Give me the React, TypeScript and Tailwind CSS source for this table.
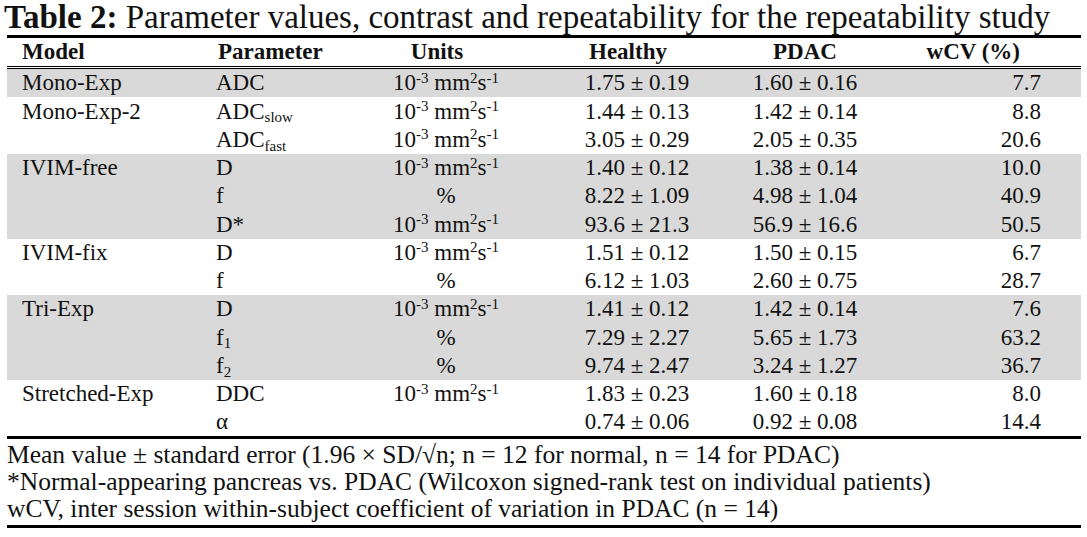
import React from "react";

type Row = {
  model?: string;
  param: React.ReactNode;
  units?: "mm" | "pct";
  healthy: string;
  pdac: string;
  wcv: string;
};

type Group = { shaded: boolean; rows: Row[] };

const Sub = ({ children }: { children: React.ReactNode }) => (
  <sub className="text-[15px]">{children}</sub>
);

const Sup = ({ children }: { children: React.ReactNode }) => (
  <sup className="text-[15px]">{children}</sup>
);

const groups: Group[] = [
  {
    shaded: true,
    rows: [{ model: "Mono-Exp", param: "ADC", units: "mm", healthy: "1.75 ± 0.19", pdac: "1.60 ± 0.16", wcv: "7.7" }],
  },
  {
    shaded: false,
    rows: [
      {
        model: "Mono-Exp-2",
        param: (
          <>
            ADC<Sub>slow</Sub>
          </>
        ),
        units: "mm",
        healthy: "1.44 ± 0.13",
        pdac: "1.42 ± 0.14",
        wcv: "8.8",
      },
      {
        param: (
          <>
            ADC<Sub>fast</Sub>
          </>
        ),
        units: "mm",
        healthy: "3.05 ± 0.29",
        pdac: "2.05 ± 0.35",
        wcv: "20.6",
      },
    ],
  },
  {
    shaded: true,
    rows: [
      { model: "IVIM-free", param: "D", units: "mm", healthy: "1.40 ± 0.12", pdac: "1.38 ± 0.14", wcv: "10.0" },
      { param: "f", units: "pct", healthy: "8.22 ± 1.09", pdac: "4.98 ± 1.04", wcv: "40.9" },
      { param: "D*", units: "mm", healthy: "93.6 ± 21.3", pdac: "56.9 ± 16.6", wcv: "50.5" },
    ],
  },
  {
    shaded: false,
    rows: [
      { model: "IVIM-fix", param: "D", units: "mm", healthy: "1.51 ± 0.12", pdac: "1.50 ± 0.15", wcv: "6.7" },
      { param: "f", units: "pct", healthy: "6.12 ± 1.03", pdac: "2.60 ± 0.75", wcv: "28.7" },
    ],
  },
  {
    shaded: true,
    rows: [
      { model: "Tri-Exp", param: "D", units: "mm", healthy: "1.41 ± 0.12", pdac: "1.42 ± 0.14", wcv: "7.6" },
      {
        param: (
          <>
            f<Sub>1</Sub>
          </>
        ),
        units: "pct",
        healthy: "7.29 ± 2.27",
        pdac: "5.65 ± 1.73",
        wcv: "63.2",
      },
      {
        param: (
          <>
            f<Sub>2</Sub>
          </>
        ),
        units: "pct",
        healthy: "9.74 ± 2.47",
        pdac: "3.24 ± 1.27",
        wcv: "36.7",
      },
    ],
  },
  {
    shaded: false,
    rows: [
      { model: "Stretched-Exp", param: "DDC", units: "mm", healthy: "1.83 ± 0.23", pdac: "1.60 ± 0.18", wcv: "8.0" },
      { param: "α", healthy: "0.74 ± 0.06", pdac: "0.92 ± 0.08", wcv: "14.4" },
    ],
  },
];

function Units({ kind }: { kind?: "mm" | "pct" }) {
  if (kind === "pct") return <span>%</span>;
  if (kind === "mm")
    return (
      <span>
        10<Sup>-3</Sup> mm<Sup>2</Sup>s<Sup>-1</Sup>
      </span>
    );
  return null;
}

function DataRow({ row }: { row: Row }) {
  return (
    <div className="flex h-[28.25px] items-center whitespace-nowrap pt-[1px]">
      <div className="w-[209px] pl-[15px]">{row.model}</div>
      <div className="w-[160px]">{row.param}</div>
      <div className="flex w-[140px] justify-center">
        <Units kind={row.units} />
      </div>
      <div className="flex w-[242px] justify-center">{row.healthy}</div>
      <div className="flex w-[94px] justify-center">{row.pdac}</div>
      <div className="w-[189px] text-right">{row.wcv}</div>
    </div>
  );
}

export default function App() {
  return (
    <div
      className="h-[537px] w-[1087px] bg-white text-[#111]"
      style={{ fontFamily: '"Liberation Serif", serif' }}
    >
      <div className="whitespace-nowrap pl-[4px] pt-[1px] text-[33px] leading-[33px]">
        <span className="font-bold">Table 2:</span> Parameter values, contrast and repeatability for the repeatability study
      </div>
      <div className="mx-[7px] mt-[1px] w-[1074px] text-[23px]">
        <div className="h-[3px] bg-black" />
        <div className="flex h-[28px] items-center whitespace-nowrap pt-[1px] font-bold">
          <div className="w-[209px] pl-[15px]">Model</div>
          <div className="w-[160px] pl-[2px]">Parameter</div>
          <div className="flex w-[122px] justify-center">Units</div>
          <div className="flex w-[260px] justify-center">Healthy</div>
          <div className="flex w-[94px] justify-center">PDAC</div>
          <div className="w-[168px] text-right">wCV (%)</div>
        </div>
        <div className="h-[1px] bg-black" />
        <div className="h-[1px]" />
        <div className="h-[1px] bg-black" />
        {groups.map((g, i) => (
          <div key={i} className={g.shaded ? "bg-[#d9d9d9]" : ""}>
            {g.rows.map((r, j) => (
              <DataRow key={j} row={r} />
            ))}
          </div>
        ))}
        <div className="h-[3px] bg-black" />
        <div className="whitespace-nowrap pt-[2px] text-[25.5px] leading-[27px]">
          <div>Mean value ± standard error (1.96 × SD/√n; n = 12 for normal, n = 14 for PDAC)</div>
          <div>*Normal-appearing pancreas vs. PDAC (Wilcoxon signed-rank test on individual patients)</div>
          <div>wCV, inter session within-subject coefficient of variation in PDAC (n = 14)</div>
        </div>
        <div className="mt-[3px] h-[3px] bg-black" />
      </div>
    </div>
  );
}
